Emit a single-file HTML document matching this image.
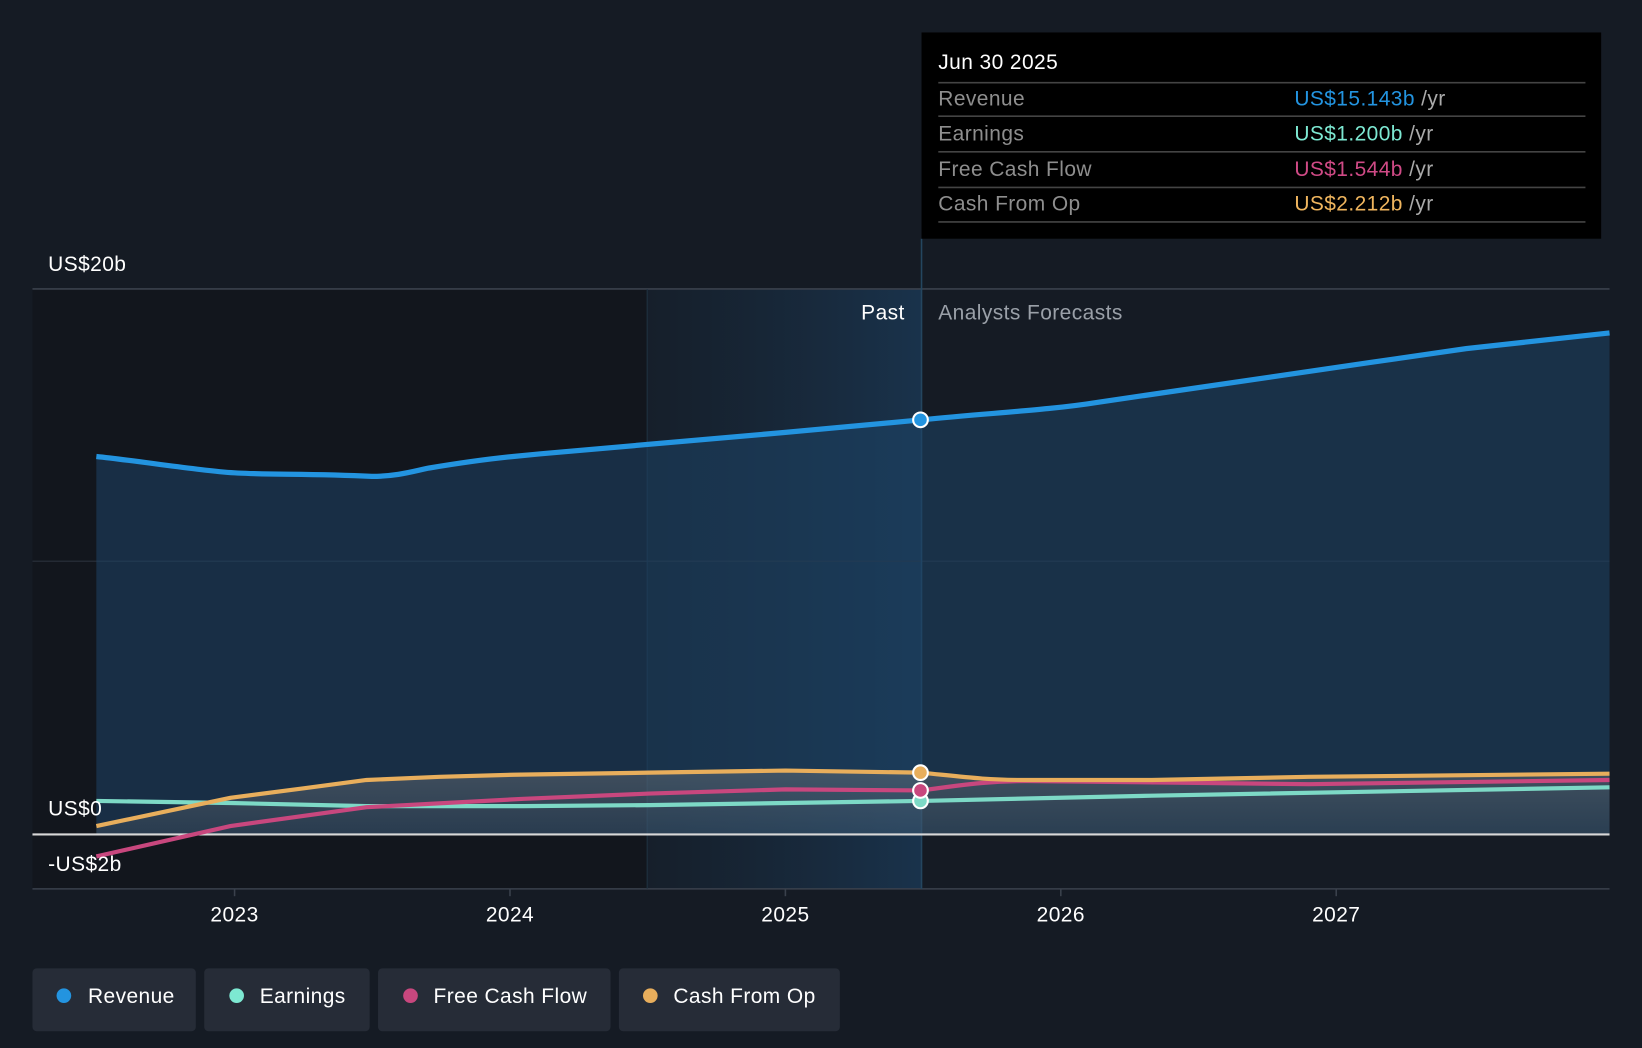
<!DOCTYPE html>
<html><head><meta charset="utf-8"><style>
html,body{margin:0;padding:0;background:#151b24;width:1642px;height:1048px;overflow:hidden}
svg{display:block}
text{font-family:"Liberation Sans",sans-serif;letter-spacing:0.4px}
</style></head><body>
<svg width="1642" height="1048" viewBox="0 0 1568 1001" preserveAspectRatio="none">
<defs>
<linearGradient id="pg" x1="0" x2="1" y1="0" y2="0"><stop offset="0" stop-color="#1a3650" stop-opacity="0.15"/><stop offset="1" stop-color="#1c4266" stop-opacity="0.6"/></linearGradient>
<linearGradient id="gf" x1="0" x2="0" y1="0" y2="1"><stop offset="0" stop-color="#8a8a8a" stop-opacity="0.35"/><stop offset="1" stop-color="#8a8a8a" stop-opacity="0.15"/></linearGradient>
</defs>
<rect width="1568" height="1001" fill="#151b24"/>
<rect x="31" y="276" width="587" height="573" fill="#12161d"/>
<rect x="618" y="276" width="262" height="573" fill="url(#pg)"/>
<line x1="31" y1="276" x2="1537" y2="276" stroke="#3a414c" stroke-width="1.5"/>
<line x1="31" y1="536" x2="1537" y2="536" stroke="#2a313c" stroke-width="1"/>
<line x1="31" y1="849" x2="1537" y2="849" stroke="#3a414c" stroke-width="1.5"/>
<line x1="618" y1="276" x2="618" y2="849" stroke="#1f3242"/>
<line x1="880" y1="228" x2="880" y2="849" stroke="#24465f" stroke-width="1.5"/>
<path d="M92,436 C130,440 180,448 215,451 C250,454 290,452 355,455 C380,455 395,450 410,447 C440,442 460,439 490,436 C560,429 620,425 750,413 L880,401 C950,394 1000,392 1050,384 C1150,370 1280,350 1400,333 L1537,318 L1537,797 L92,797 Z" fill="#1d4466" fill-opacity="0.55"/>
<path d="M92,789 L220,762 L290,753 L350,745 L420,742 L490,740 L620,738 L750,736 L880,738 L960,745 L1100,745 L1250,742 L1537,739 L1537,797 L92,797Z" fill="url(#gf)"/>
<line x1="31" y1="797" x2="1537" y2="797" stroke="#d8d8d8" stroke-width="2"/>
<path d="M92,436 C130,440 180,448 215,451 C250,454 290,452 355,455 C380,455 395,450 410,447 C440,442 460,439 490,436 C560,429 620,425 750,413 L880,401 C950,394 1000,392 1050,384 C1150,370 1280,350 1400,333 L1537,318" fill="none" stroke="#2394e0" stroke-width="5"/>
<path d="M92,765 L220,767 L350,770 L500,770 L620,769 L750,767 L880,765 L1100,760 L1537,752" fill="none" stroke="#7dd9c6" stroke-width="4"/>
<path d="M92,818 L220,789 L350,771 L500,763 L620,758 L750,754 L880,755 C930,748 950,746 980,746 L1250,749 L1537,745" fill="none" stroke="#c8477e" stroke-width="4"/>
<path d="M92,789 L220,762 L290,753 L350,745 L420,742 L490,740 L620,738 L750,736 L880,738 C920,742 940,745 980,745 L1100,745 L1250,742 L1537,739" fill="none" stroke="#e8ae5c" stroke-width="4"/>
<circle cx="879" cy="401" r="7" fill="#2394e0" stroke="#fff" stroke-width="2"/>
<circle cx="879" cy="765" r="7" fill="#7dd9c6" stroke="#fff" stroke-width="2"/>
<circle cx="879" cy="755" r="7" fill="#c8477e" stroke="#fff" stroke-width="2"/>
<circle cx="879" cy="738" r="7" fill="#e8ae5c" stroke="#fff" stroke-width="2"/>
<text x="46" y="259" fill="#fff" font-size="20">US$20b</text>
<text x="46" y="779" fill="#fff" font-size="20">US$0</text>
<text x="46" y="832" fill="#fff" font-size="20">-US$2b</text>
<text x="864" y="305" fill="#fff" font-size="20" text-anchor="end">Past</text>
<text x="896" y="305" fill="#9aa0a8" font-size="20">Analysts Forecasts</text>
<g fill="#fff" font-size="20" text-anchor="middle">
<text x="224" y="880">2023</text><text x="487" y="880">2024</text><text x="750" y="880">2025</text><text x="1013" y="880">2026</text><text x="1276" y="880">2027</text></g>
<g stroke="#3a414c" stroke-width="1.5"><line x1="224" y1="849" x2="224" y2="856"/><line x1="487" y1="849" x2="487" y2="856"/><line x1="750" y1="849" x2="750" y2="856"/><line x1="1013" y1="849" x2="1013" y2="856"/><line x1="1276" y1="849" x2="1276" y2="856"/></g>
<rect x="880" y="31" width="649" height="197" fill="#000"/>
<text x="896" y="66" fill="#fff" font-size="20">Jun 30 2025</text>
<g stroke="#444" stroke-width="1.5"><line x1="896" y1="79" x2="1514" y2="79"/><line x1="896" y1="111" x2="1514" y2="111"/><line x1="896" y1="145" x2="1514" y2="145"/><line x1="896" y1="179" x2="1514" y2="179"/><line x1="896" y1="212" x2="1514" y2="212"/></g>
<g font-size="20" fill="#8e8e8e">
<text x="896" y="101">Revenue</text><text x="896" y="134">Earnings</text><text x="896" y="168">Free Cash Flow</text><text x="896" y="201">Cash From Op</text></g>
<g font-size="20">
<text x="1236" y="101"><tspan fill="#2394e0">US$15.143b</tspan><tspan fill="#aaa"> /yr</tspan></text>
<text x="1236" y="134"><tspan fill="#7de8d2">US$1.200b</tspan><tspan fill="#aaa"> /yr</tspan></text>
<text x="1236" y="168"><tspan fill="#d04a86">US$1.544b</tspan><tspan fill="#aaa"> /yr</tspan></text>
<text x="1236" y="201"><tspan fill="#efb55e">US$2.212b</tspan><tspan fill="#aaa"> /yr</tspan></text></g>
<g fill="#262c37"><rect x="31" y="925" width="156" height="60" rx="4"/><rect x="195" y="925" width="158" height="60" rx="4"/><rect x="361" y="925" width="222" height="60" rx="4"/><rect x="591" y="925" width="211" height="60" rx="4"/></g>
<circle cx="61" cy="951" r="7" fill="#2394e0"/><circle cx="226" cy="951" r="7" fill="#7de8d2"/><circle cx="392" cy="951" r="7" fill="#c8477e"/><circle cx="621" cy="951" r="7" fill="#e8ae5c"/>
<g fill="#fff" font-size="20"><text x="84" y="958">Revenue</text><text x="248" y="958">Earnings</text><text x="414" y="958">Free Cash Flow</text><text x="643" y="958">Cash From Op</text></g>
</svg>
</body></html>
